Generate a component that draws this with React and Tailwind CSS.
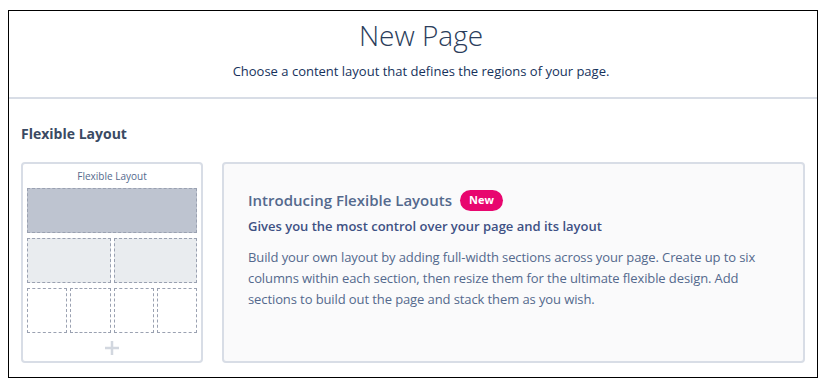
export default function App() {
  const dash = "border border-dashed border-[#9aa1b1]";
  return (
    <div className="pt-[10px] pl-[8px]" style={{ fontFamily: '"Open Sans", "Noto Sans", sans-serif' }}>
      <div className="w-[810px] h-[368px] border border-black bg-white flex flex-col">
        <div className="flex flex-col items-center pl-[16px] pt-[6px] h-[88px] border-b-2 border-[#d8dde6]">
          <div className="text-[28px] leading-[36px] font-light text-[#2b3d5b]">New Page</div>
          <div className="mt-[9px] text-[13px] leading-[18px] text-[#16325c]">Choose a content layout that defines the regions of your page.</div>
        </div>
        <div className="px-[12px] pt-[25px]">
          <div className="text-[14px] leading-[20px] font-bold text-[#3a4a63]">Flexible Layout</div>
          <div className="mt-[18px] flex gap-[19px]">
            <div className="w-[182px] h-[201px] border-2 border-[#d8dde6] rounded-[4px] px-[4px] pt-[5px] flex flex-col">
              <div className="text-center text-[10px] leading-[14px] text-[#54698d]">Flexible Layout</div>
              <div className={`mt-[5px] h-[45px] bg-[#bec4d0] ${dash}`}></div>
              <div className="mt-[5px] flex gap-[3px]">
                <div className={`flex-1 h-[45px] bg-[#e9ecef] ${dash}`}></div>
                <div className={`flex-1 h-[45px] bg-[#e9ecef] ${dash}`}></div>
              </div>
              <div className="mt-[5px] flex gap-[3px]">
                <div className={`flex-1 h-[45px] bg-white ${dash}`}></div>
                <div className={`flex-1 h-[45px] bg-white ${dash}`}></div>
                <div className={`flex-1 h-[45px] bg-white ${dash}`}></div>
                <div className={`flex-1 h-[45px] bg-white ${dash}`}></div>
              </div>
              <div className="flex justify-center mt-[7px]">
                <svg width="16" height="16" viewBox="0 0 16 16">
                  <path d="M8 1v14M1 8h14" stroke="#d2d7df" strokeWidth="2.5" />
                </svg>
              </div>
            </div>
            <div className="w-[583px] h-[201px] border-2 border-[#d8dde6] rounded-[4px] bg-[#fafafb] pl-[24px] pr-[20px] pt-[25px]">
              <div className="flex items-center gap-[8px]">
                <div className="text-[15px] leading-[22px] font-semibold text-[#54698d]">Introducing Flexible Layouts</div>
                <div className="h-[21px] px-[9px] rounded-full bg-[#e8066f] text-white text-[11px] font-bold flex items-center">New</div>
              </div>
              <div className="mt-[5px] text-[13px] leading-[20px] font-semibold text-[#3e5184]">Gives you the most control over your page and its layout</div>
              <div className="mt-[11px] text-[13px] leading-[21px] tracking-[-0.1px] text-[#54698d]">
                Build your own layout by adding full-width sections across your page. Create up to six columns within each section, then resize them for the ultimate flexible design. Add sections to build out the page and stack them as you wish.
              </div>
            </div>
          </div>
        </div>
      </div>
    </div>
  );
}
